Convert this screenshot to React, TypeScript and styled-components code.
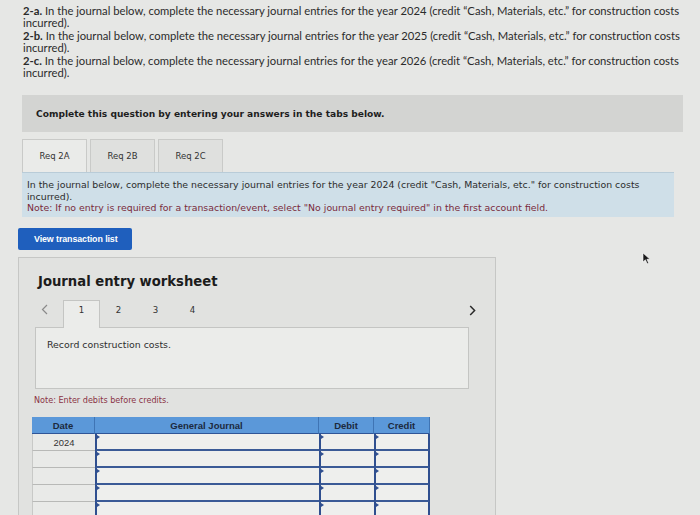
import React from "react";
import styled, { createGlobalStyle } from "styled-components";

const GlobalStyle = createGlobalStyle`
  html, body {
    margin: 0;
    padding: 0;
    background: #e6e7e5;
  }
  body {
    font-family: "Open Sans", Arial, sans-serif;
    color: #2a2a2a;
  }
`;

const Page = styled.div`
  position: relative;
  width: 700px;
  height: 515px;
  overflow: hidden;
  padding: 5px 17px 0 22px;
  box-sizing: border-box;
`;

const Intro = styled.div`
  font-family: "Lato", "Open Sans", sans-serif;
  font-size: 11.25px;
  line-height: 12.4px;
  color: #2b2b2b;
  padding-left: 1px;
`;

const IntroItem = styled.p`
  margin: 0;
  b {
    font-weight: 700;
  }
`;

const InstructionBar = styled.div`
  margin-top: 16px;
  height: 37px;
  background: #d3d4d2;
  display: flex;
  align-items: center;
  padding-left: 14px;
  font-family: "DejaVu Sans", Verdana, sans-serif;
  font-weight: 700;
  font-size: 9.1px;
  color: #1e1e1e;
`;

const TabRow = styled.div`
  display: flex;
  gap: 3px;
  margin-top: 7px;
  margin-right: 9px;
`;

const Tab = styled.div<{ $active?: boolean }>`
  width: 65px;
  height: 33px;
  box-sizing: border-box;
  display: flex;
  align-items: center;
  justify-content: center;
  border: 1px solid #c9cac8;
  border-bottom: none;
  background: ${(p) => (p.$active ? "#eaebe9" : "#dfe0de")};
  font-family: "DejaVu Sans", Verdana, sans-serif;
  font-size: 8.5px;
  color: #333;
`;

const InfoBox = styled.div`
  margin-right: 9px;
  height: 45px;
  box-sizing: border-box;
  background: #cfdfe8;
  border-top: 1px solid #b9ccd8;
  padding: 6px 8px 0 5px;
  font-family: "DejaVu Sans", Verdana, sans-serif;
  font-size: 9.4px;
  line-height: 11.5px;
  color: #2c2c2c;
`;

const InfoLine = styled.p<{ $note?: boolean }>`
  margin: 0;
  color: ${(p) => (p.$note ? "#7a2b3c" : "#2c2c2c")};
`;

const ViewButton = styled.button`
  margin: 11px 0 0 -4px;
  width: 114px;
  height: 22px;
  border: none;
  border-radius: 2px;
  background: #1f5fbd;
  color: #ffffff;
  font-family: "Liberation Sans", Arial, sans-serif;
  font-weight: 700;
  font-size: 8.9px;
  text-align: left;
  padding: 0 0 0 16px;
  letter-spacing: -0.1px;
`;

const Worksheet = styled.div`
  margin: 7px 0 0 -4px;
  width: 478px;
  height: 270px;
  box-sizing: border-box;
  border: 1px solid #c6c7c5;
  background: #e1e2e0;
  padding: 16px 0 0 15px;
`;

const WorksheetTitle = styled.h2`
  margin: 0 0 0 4px;
  font-family: "DejaVu Sans", Verdana, sans-serif;
  font-weight: 700;
  font-size: 13.2px;
  line-height: 16px;
  color: #1c1c1c;
`;

const Pager = styled.div`
  display: flex;
  align-items: flex-start;
  margin-top: 10px;
  height: 27px;
  width: 442px;
`;

const Chevron = styled.svg<{ $right?: boolean }>`
  margin: ${(p) => (p.$right ? "5px 0 0 auto" : "4px 15px 0 7px")};
`;

const PageTab = styled.div<{ $active?: boolean }>`
  width: 37px;
  height: 28px;
  box-sizing: border-box;
  display: flex;
  justify-content: center;
  padding-top: 4px;
  font-family: "DejaVu Sans", Verdana, sans-serif;
  font-size: 8.6px;
  color: #333;
  background: ${(p) => (p.$active ? "#ebecea" : "transparent")};
  border: ${(p) => (p.$active ? "1px solid #c4c5c3" : "1px solid transparent")};
  border-bottom: none;
  position: relative;
  z-index: 1;
`;

const RecordBox = styled.div`
  width: 434px;
  height: 62px;
  box-sizing: border-box;
  margin-left: 1px;
  border: 1px solid #c4c5c3;
  background: #ebecea;
  padding: 11px 0 0 11px;
  font-family: "DejaVu Sans", Verdana, sans-serif;
  font-size: 9.4px;
  color: #2e2e2e;
`;

const NoteText = styled.p`
  margin: 6px 0 0 0;
  font-family: "DejaVu Sans", Verdana, sans-serif;
  font-size: 8.1px;
  line-height: 10px;
  color: #8a3345;
`;

const Table = styled.div`
  margin-top: 12px;
  margin-left: -2px;
  display: grid;
  grid-template-columns: 63px 224px 55px 56px;
  grid-auto-rows: 17px;
  width: 398px;
`;

const HeadCell = styled.div`
  height: 18px;
  background: #5b98d9;
  border-right: 1px solid #3f74b4;
  border-bottom: 2px solid #2f5597;
  box-sizing: border-box;
  display: flex;
  align-items: center;
  justify-content: center;
  font-family: "Liberation Sans", Arial, sans-serif;
  font-weight: 700;
  font-size: 9.5px;
  color: #1c2a3e;
`;

const DateCell = styled.div`
  box-sizing: border-box;
  border-bottom: 1px solid #b8b9b7;
  border-left: 1px solid #c8c9c7;
  background: #e9eae8;
  display: flex;
  align-items: center;
  justify-content: center;
  font-family: "Liberation Sans", Arial, sans-serif;
  font-size: 9.4px;
  color: #333;
`;

const InputCell = styled.div<{ $last?: boolean }>`
  position: relative;
  box-sizing: border-box;
  background: #eeefed;
  border-left: 2px solid #2f4f8f;
  border-bottom: 2px solid #3a5a96;
  border-right: ${(p) => (p.$last ? "2px solid #2f4f8f" : "none")};
  &::before {
    content: "";
    position: absolute;
    left: 0;
    top: 1px;
    border-top: 2px solid transparent;
    border-bottom: 2px solid transparent;
    border-left: 3px solid #2f4f8f;
  }
`;

const Cursor = styled.svg`
  position: absolute;
  left: 642px;
  top: 252px;
`;

const intro = [
  { label: "2-a.", year: 2024 },
  { label: "2-b.", year: 2025 },
  { label: "2-c.", year: 2026 },
];

const rows = ["2024", "", "", "", ""];

export default function App() {
  return (
    <>
      <GlobalStyle />
      <Page>
        <Intro>
          {intro.map((item) => (
            <IntroItem key={item.label}>
              <b>{item.label}</b> In the journal below, complete the necessary
              journal entries for the year {item.year} (credit “Cash, Materials,
              etc.” for construction costs incurred).
            </IntroItem>
          ))}
        </Intro>

        <InstructionBar>
          Complete this question by entering your answers in the tabs below.
        </InstructionBar>

        <TabRow>
          <Tab $active>Req 2A</Tab>
          <Tab>Req 2B</Tab>
          <Tab>Req 2C</Tab>
        </TabRow>

        <InfoBox>
          <InfoLine>
            In the journal below, complete the necessary journal entries for the
            year 2024 (credit "Cash, Materials, etc." for construction costs
            incurred).
          </InfoLine>
          <InfoLine $note>
            Note: If no entry is required for a transaction/event, select "No
            journal entry required" in the first account field.
          </InfoLine>
        </InfoBox>

        <ViewButton>View transaction list</ViewButton>

        <Worksheet>
          <WorksheetTitle>Journal entry worksheet</WorksheetTitle>
          <Pager>
            <Chevron width="7" height="11" viewBox="0 0 7 11">
              <path d="M6 1 L1.5 5.5 L6 10" fill="none" stroke="#8a8a8a" strokeWidth="1.2" />
            </Chevron>
            <PageTab $active>1</PageTab>
            <PageTab>2</PageTab>
            <PageTab>3</PageTab>
            <PageTab>4</PageTab>
            <Chevron $right width="7" height="11" viewBox="0 0 7 11">
              <path d="M1.2 1 L5.6 5.5 L1.2 10" fill="none" stroke="#2a2a2a" strokeWidth="1.5" />
            </Chevron>
          </Pager>
          <RecordBox>Record construction costs.</RecordBox>
          <NoteText>Note: Enter debits before credits.</NoteText>
          <Table>
            <HeadCell>Date</HeadCell>
            <HeadCell>General Journal</HeadCell>
            <HeadCell>Debit</HeadCell>
            <HeadCell>Credit</HeadCell>
            {rows.map((d, i) => (
              <React.Fragment key={i}>
                <DateCell>{d}</DateCell>
                <InputCell />
                <InputCell />
                <InputCell $last />
              </React.Fragment>
            ))}
          </Table>
        </Worksheet>

        <Cursor width="9" height="13" viewBox="0 0 9 13">
          <path d="M1 1 L1 10 L3.4 7.8 L5.2 11.8 L6.6 11.1 L4.9 7.3 L8 7.3 Z" fill="#1a1a1a" stroke="#fff" strokeWidth="0.6" />
        </Cursor>
      </Page>
    </>
  );
}
